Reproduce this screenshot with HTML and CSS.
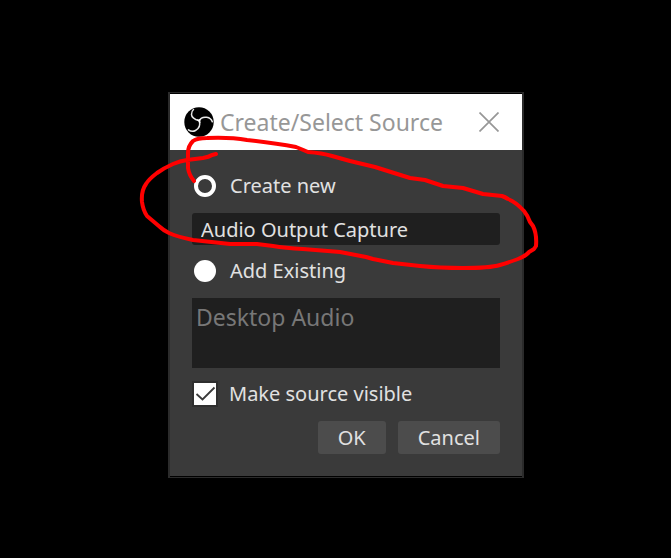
FILE: index.html
```html
<!DOCTYPE html>
<html lang="en">
<head>
<meta charset="utf-8">
<title>Create/Select Source</title>
<link rel="stylesheet" href="styles.css">
</head>
<body>
<main class="stage">
  <form class="dialog">
    <header class="titlebar">
      <svg class="logo" viewBox="0 0 30 30" aria-hidden="true">
        <circle cx="15" cy="15" r="14.7" fill="#000"/>
        <g fill="none" stroke="#e8e8e8" stroke-width="1.500" stroke-linecap="round">
          <path d="M15.300 13.800C11 12.500 7.500 10.500 7.500 7.500C7.500 5.500 8 3.800 9.500 2.500"/>
          <path d="M15.300 13.800C16.500 11 19.500 9.800 22.800 10.300C25.800 10.800 27.500 12.500 28.300 14.800"/>
          <path d="M15.300 13.800C16.500 18.500 14.500 22 11.500 23.500C9.300 24.600 6.500 24.300 4.500 22.800"/>
        </g>
        <path d="M13.300 12.800Q15 13.300 16.200 12.200Q15.700 14 16 15.800Q15.300 13.800 13.300 12.800Z" fill="#fff" stroke="#fff" stroke-width="0.800"/>
      </svg>
      <h1 class="title">Create/Select Source</h1>
      <button class="close" type="button" aria-label="Close">
        <svg viewBox="0 0 20 20" aria-hidden="true"><path d="M0.500 0.500L19.500 19.500M19.500 0.500L0.500 19.500" fill="none" stroke="#979797" stroke-width="1.700"/></svg>
      </button>
    </header>
    <div class="content">
      <label class="option"><input class="radio" type="radio" name="mode" checked>Create new</label>
      <input class="name" type="text" value="Audio Output Capture" aria-label="Source name">
      <label class="option"><input class="radio" type="radio" name="mode">Add Existing</label>
      <ul class="sources"><li>Desktop Audio</li></ul>
      <label class="option visible">
        <span class="tick"><input class="check" type="checkbox" checked><svg viewBox="0 0 22 22" aria-hidden="true"><path d="M2.500 11L8.500 16.500L20.500 4.500" fill="none" stroke="#3a3a3a" stroke-width="1.800"/></svg></span>Make source visible</label>
      <div class="actions">
        <button class="action" type="submit">OK</button>
        <button class="action" type="button">Cancel</button>
      </div>
    </div>
    <svg class="scribble" viewBox="130 130 420 150" aria-hidden="true">
      <path d="M194 181Q189 175 188 168V153Q188 146 193 141Q197 138 207 138Q230 137 247 140Q275 143 296 147Q301 149 308 152Q322 153 332 156L350 161L375 167L410 178L425 180L443 186L463 188L483 194L502 196Q505 197 508 199Q516 202 524 211Q528 216 530 222L533 226Q537 234 536 246L534 249L529 252Q526 256 518 259Q510 262 500 265Q490 268 463 268Q440 268 420 266L393 263L373 259L366 257L340 252L303 249Q285 248 273 246L257 244H230L193 240Q178 237 169 233Q163 230 160 227L147 216Q143 210 142 202Q141 191 146 184Q149 179 157 173Q164 168 173 164Q180 161 187 160L203 158Q209 157 212 155L216 154" fill="none" stroke="#f00" stroke-width="4" stroke-linecap="round" stroke-linejoin="round"/>
    </svg>
  </form>
</main>
</body>
</html>
```
FILE: styles.css
```css
* { box-sizing: border-box; }
body {
  margin: 0;
  background: #000;
  color: #e1e1e1;
  font: 20px/28px "Noto Sans", "Open Sans", sans-serif;
}
.stage { padding: 92px 147px 80px 168px; }
.dialog {
  position: relative;
  padding: 1px 0;
  border: 1px solid #2b2b2b;
  border-width: 1px 2px;
  background: #000;
}
.titlebar {
  display: flex;
  align-items: center;
  height: 56px;
  padding: 0 23px 0 14px;
  background: #fff;
}
.logo { width: 30px; height: 30px; flex: none; }
.title {
  flex: 1;
  margin: 0 0 0 6px;
  color: #979797;
  font-size: 23px;
  font-weight: 400;
  white-space: nowrap;
}
.close { padding: 0; border: 0; background: none; }
.close svg { display: block; width: 20px; height: 20px; }
.content {
  display: flex;
  flex-direction: column;
  padding: 22px 22px;
  background: #3a3a3a;
}
.option {
  display: flex;
  align-items: center;
  gap: 14px;
  white-space: nowrap;
}
.radio {
  appearance: none;
  width: 22px;
  height: 22px;
  margin: 0 0 0 2px;
  border-radius: 50%;
  background: #fff;
}
.radio:checked { border: 4px solid #fff; background: #3a3a3a; }
.name {
  width: 100%;
  height: 32px;
  margin: 13px 0 12px;
  padding: 0 9px;
  border: 0;
  border-radius: 3px;
  background: #1f1f1f;
  color: #e1e1e1;
  font: inherit;
}
.sources {
  height: 70px;
  margin: 13px 0 12px;
  padding: 5px 4px;
  background: #1f1f1f;
  color: #777;
  font-size: 23px;
  list-style: none;
}
.visible { gap: 11px; }
.tick {
  position: relative;
  width: 26px;
  height: 26px;
  border: 2px solid #2f2f2f;
}
.check {
  appearance: none;
  display: block;
  width: 22px;
  height: 22px;
  margin: 0;
  background: #fff;
}
.tick svg { position: absolute; inset: 0; display: none; pointer-events: none; }
.check:checked + svg { display: block; }
.actions {
  display: flex;
  justify-content: flex-end;
  gap: 12px;
  margin-top: 13px;
}
.action {
  height: 33px;
  padding: 0 20px;
  border: 0;
  border-radius: 3px;
  background: #4c4c4c;
  color: #e1e1e1;
  font: inherit;
}
.scribble {
  position: absolute;
  top: 37px;
  left: -40px;
  width: 420px;
  height: 150px;
  pointer-events: none;
}
```
